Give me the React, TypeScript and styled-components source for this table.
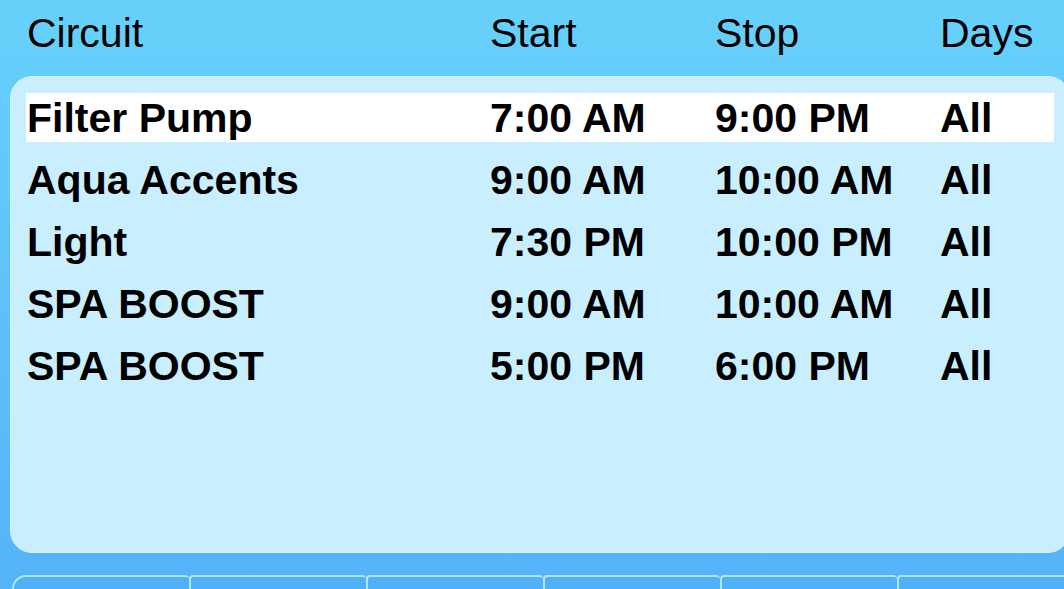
import styled, { createGlobalStyle } from 'styled-components'

interface Schedule {
  circuit: string
  start: string
  stop: string
  days: string
}

const schedules: Schedule[] = [
  { circuit: 'Filter Pump', start: '7:00 AM', stop: '9:00 PM', days: 'All' },
  { circuit: 'Aqua Accents', start: '9:00 AM', stop: '10:00 AM', days: 'All' },
  { circuit: 'Light', start: '7:30 PM', stop: '10:00 PM', days: 'All' },
  { circuit: 'SPA BOOST', start: '9:00 AM', stop: '10:00 AM', days: 'All' },
  { circuit: 'SPA BOOST', start: '5:00 PM', stop: '6:00 PM', days: 'All' }
]

const tabs = ['', '', '', '', '', '']

const GlobalStyle = createGlobalStyle`
  html, body {
    margin: 0;
    padding: 0;
  }
  body {
    font-family: "Liberation Sans", Arial, Helvetica, sans-serif;
    color: #000;
  }
`

const Screen = styled.div`
  width: 1064px;
  height: 589px;
  overflow: hidden;
  background: linear-gradient(180deg, #67d1fa 0%, #5ec4f9 45%, #55b3f8 100%);
  display: flex;
  flex-direction: column;

  & > * {
    flex-shrink: 0;
  }
`

const columns = '463px 225px 225px 1fr'

const Header = styled.div`
  display: grid;
  grid-template-columns: ${columns};
  padding: 11px 0 0 26px;
  height: 65px;
  box-sizing: border-box;
  font-size: 41px;
  line-height: 45px;
  font-weight: 400;
`

const HeadCell = styled.div`
  padding-left: 1px;
  white-space: nowrap;
`

const Panel = styled.div`
  margin: 11px 0 0 10px;
  width: 1060px;
  height: 477px;
  box-sizing: border-box;
  background: #c9eefd;
  border: 1px solid #d6f3fe;
  border-radius: 22px;
  padding: 16px 15px 0 15px;
  display: flex;
  flex-direction: column;
  gap: 13px;
`

const Row = styled.div<{ selected: boolean }>`
  display: grid;
  grid-template-columns: ${columns};
  height: 49px;
  flex-shrink: 0;
  align-items: center;
  background: ${props => props.selected ? '#ffffff' : 'transparent'};
  font-size: 41px;
  font-weight: 700;
  line-height: 50px;
`

const Cell = styled.div`
  padding-left: 1px;
  white-space: nowrap;
`

const TabBar = styled.div`
  display: flex;
  margin: 22px 0 0 12px;
`

const Tab = styled.div<{ first: boolean }>`
  width: 177px;
  height: 40px;
  flex-shrink: 0;
  box-sizing: border-box;
  border: 2px solid #aee6fd;
  border-right: none;
  border-radius: ${props => props.first ? '14px' : '4px'} 4px 0 0;
  background: #52b1f6;
`

export default function App(): JSX.Element {
  return (
    <>
      <GlobalStyle />
      <Screen>
        <Header>
          <HeadCell>Circuit</HeadCell>
          <HeadCell>Start</HeadCell>
          <HeadCell>Stop</HeadCell>
          <HeadCell>Days</HeadCell>
        </Header>
        <Panel>
          {schedules.map((s, i) => (
            <Row key={i} selected={i === 0}>
              <Cell>{s.circuit}</Cell>
              <Cell>{s.start}</Cell>
              <Cell>{s.stop}</Cell>
              <Cell>{s.days}</Cell>
            </Row>
          ))}
        </Panel>
        <TabBar>
          {tabs.map((t, i) => (
            <Tab key={i} first={i === 0}>{t}</Tab>
          ))}
        </TabBar>
      </Screen>
    </>
  )
}
